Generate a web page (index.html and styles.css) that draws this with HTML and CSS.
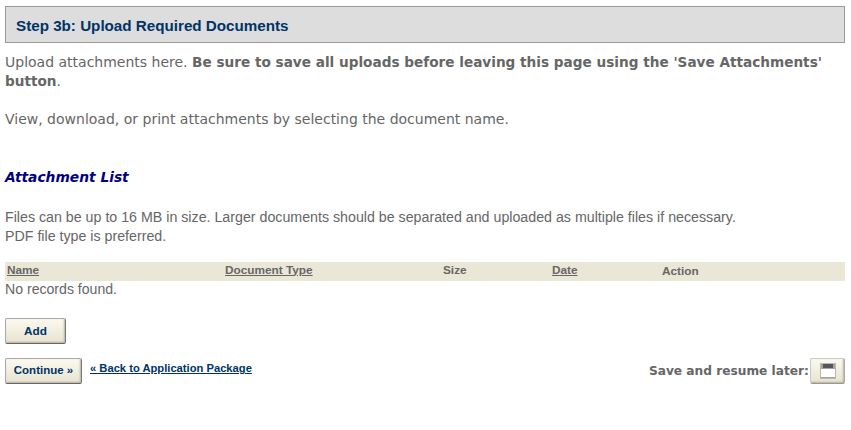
FILE: index.html
```html
<!DOCTYPE html>
<html lang="en">
<head>
    <meta charset="UTF-8">
    <title>Step 3b: Upload Required Documents</title>
    <link rel="stylesheet" href="styles.css">
</head>
<body>
<div class="step-title">Step 3b: Upload Required Documents</div>
<p class="intro">Upload attachments here. <b>Be sure to save all uploads before leaving this page using the 'Save Attachments' button</b>.</p>
<p class="intro intro-2">View, download, or print attachments by selecting the document name.</p>

<h2 class="list-title">Attachment List</h2>
<p class="note">Files can be up to 16 MB in size. Larger documents should be separated and uploaded as multiple files if necessary.<br>PDF file type is preferred.</p>

<table class="files">
    <thead>
        <tr>
            <th class="col-name"><a href="#">Name</a></th>
            <th class="col-type"><a href="#">Document Type</a></th>
            <th class="col-size"><span>Size</span></th>
            <th class="col-date"><a href="#">Date</a></th>
            <th class="col-action"><span class="action-label">Action</span></th>
        </tr>
    </thead>
    <tbody>
        <tr><td colspan="5">No records found.</td></tr>
    </tbody>
</table>

<button class="btn btn-add" type="button">Add</button>

<div class="footer-row">
    <button class="btn btn-continue" type="button">Continue »</button>
    <a class="back-link" href="#">« Back to Application Package</a>
    <div class="save-later">
        <span class="save-label">Save and resume later:</span>
        <button class="btn btn-save" type="button" aria-label="Save">
            <svg viewBox="0 0 16 16" width="16" height="16">
                <path d="M0 0h16v16H0z" fill="#b8b8b2"/>
                <path d="M1 1h14v5H1z" fill="#a5a5a0"/>
                <path d="M3 1h10v4H3z" fill="#555"/>
                <path d="M1 6h14v9H1z" fill="#fff"/>
                <path d="M1 14h14v1H1z" fill="#a5a5a0"/>
            </svg>
        </button>
    </div>
</div>
</body>
</html>
```

FILE: styles.css
```css
body {
    margin: 0;
    padding: 6px 6px 0 5px;
    background: #fff;
    color: #666;
    font-family: "Liberation Sans", Arial, sans-serif;
    font-size: 14px;
}
.step-title {
    height: 35px;
    line-height: 37px;
    padding-left: 10px;
    background: #ddd;
    border: 1px solid #999;
    color: #036;
    font-size: 15.2px;
    font-weight: bold;
}
.intro {
    margin: 10px 0 0;
    font-family: "DejaVu Sans", Verdana, sans-serif;
    font-size: 14px;
    line-height: 19px;
}
.intro b {
    font-size: 13.63px;
}
.intro-2 {
    margin-top: 19px;
}
.list-title {
    margin: 39px 0 0;
    color: #000080;
    font-family: "DejaVu Sans", Verdana, sans-serif;
    font-size: 13.8px;
    font-style: italic;
    font-weight: bold;
    line-height: 18px;
}
.note {
    margin: 22px 0 0;
    font-size: 14.22px;
    line-height: 19px;
}
.files {
    width: 840px;
    margin-top: 16px;
    border-collapse: collapse;
    table-layout: fixed;
}
.files th {
    height: 19px;
    padding: 0 0 0 2px;
    background: #ebe7d7;
    font-size: 11.8px;
    text-align: left;
    vertical-align: middle;
}
.files th a,
.files th span {
    position: relative;
    top: -2px;
    color: #666;
}
.files th .action-label {
    top: -1px;
}
.files td {
    padding: 0;
    font-size: 14.1px;
    line-height: 17px;
}
.col-name { width: 216px; }
.col-type { width: 216px; }
.col-size { width: 107px; }
.col-date { width: 108px; }
.btn {
    display: block;
    padding: 0 0 1px;
    border: 1px solid #aaa;
    border-right-color: #777;
    border-bottom-color: #666;
    border-radius: 2px;
    background: linear-gradient(#fbf9f0, #e8e3d0);
    box-shadow: inset -1px -1px 2px #b5b0a0;
    color: #036;
    font-family: "Liberation Sans", Arial, sans-serif;
    font-size: 11.8px;
    font-weight: bold;
}
.btn-add {
    width: 61px;
    height: 26px;
    margin-top: 20px;
}
.footer-row {
    display: flex;
    align-items: flex-start;
    margin-top: 14px;
}
.btn-continue {
    width: 77px;
    height: 26px;
    padding-bottom: 3px;
    font-size: 11.5px;
}
.back-link {
    margin-left: 8px;
    color: #036;
    font-size: 11.2px;
    font-weight: bold;
    line-height: 20px;
}
.save-later {
    display: flex;
    align-items: center;
    margin-left: auto;
    font-family: "DejaVu Sans", Verdana, sans-serif;
    font-size: 12.2px;
    font-weight: bold;
}
.btn-save {
    display: flex;
    align-items: center;
    justify-content: center;
    width: 35px;
    height: 26px;
    margin-left: 1px;
    border-color: #ccc #aaa #999 #ccc;
}
```
